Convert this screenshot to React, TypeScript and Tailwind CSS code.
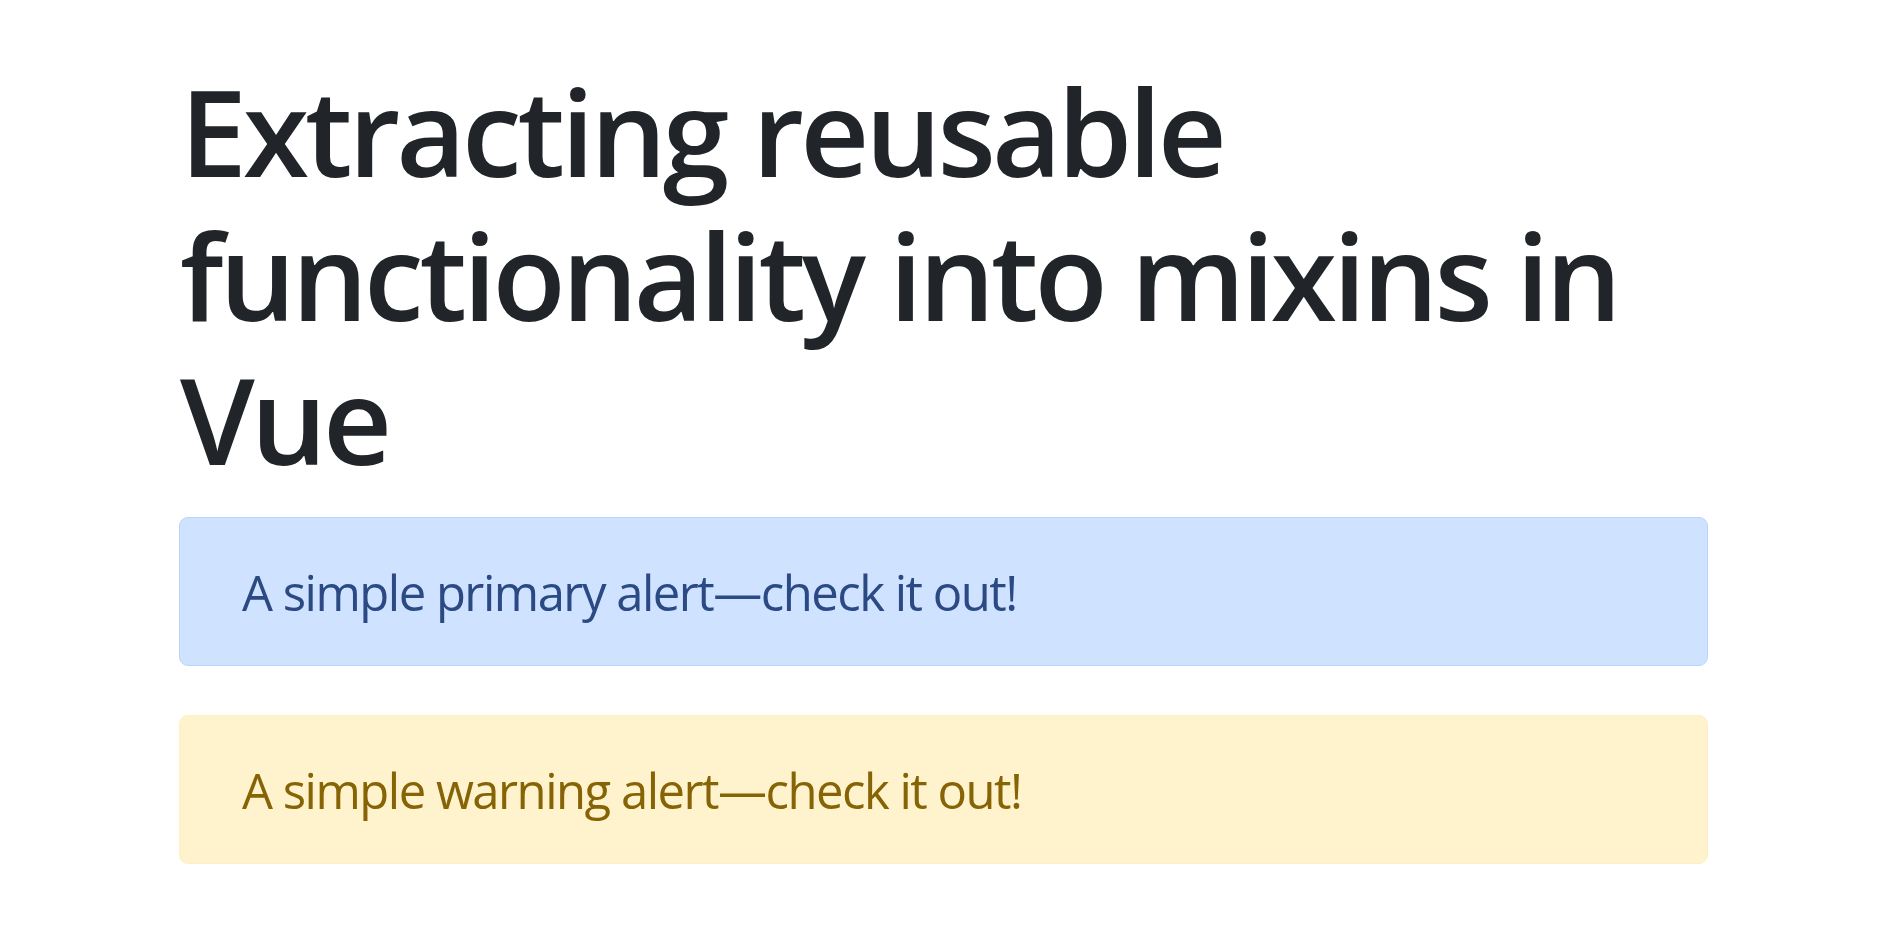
import React from "react";

const font = { fontFamily: '"Segoe UI", "Open Sans", "Noto Sans", sans-serif' };

type AlertProps = {
  kind: "primary" | "warning";
  children: React.ReactNode;
};

const Alert: React.FC<AlertProps> = ({ kind, children }) => {
  const colors =
    kind === "primary"
      ? "bg-[#cfe2ff] border-[#b8d5fc] text-[#2b4a84]"
      : "bg-[#fff3cd] border-[#ffefc2] text-[#866405]";
  return (
    <div
      className={`rounded-[9px] border pl-[62px] pr-[47px] pt-[38px] pb-[36px] text-[49px] leading-[73px] tracking-[-1.5px] ${colors}`}
    >
      {children}
    </div>
  );
};

export default function App() {
  return (
    <div className="min-h-screen bg-white" style={font}>
      <div className="ml-[179px] w-[1529px] pt-[59px]">
        <h1 className="mb-[26px] pl-[1px] text-[120px] font-semibold leading-[144px] tracking-[-4px] text-[#212529]">
          Extracting reusable functionality into mixins in Vue
        </h1>
        <div className="flex flex-col gap-[49px]">
          <Alert kind="primary">A simple primary alert—check it out!</Alert>
          <Alert kind="warning">A simple warning alert—check it out!</Alert>
        </div>
      </div>
    </div>
  );
}
